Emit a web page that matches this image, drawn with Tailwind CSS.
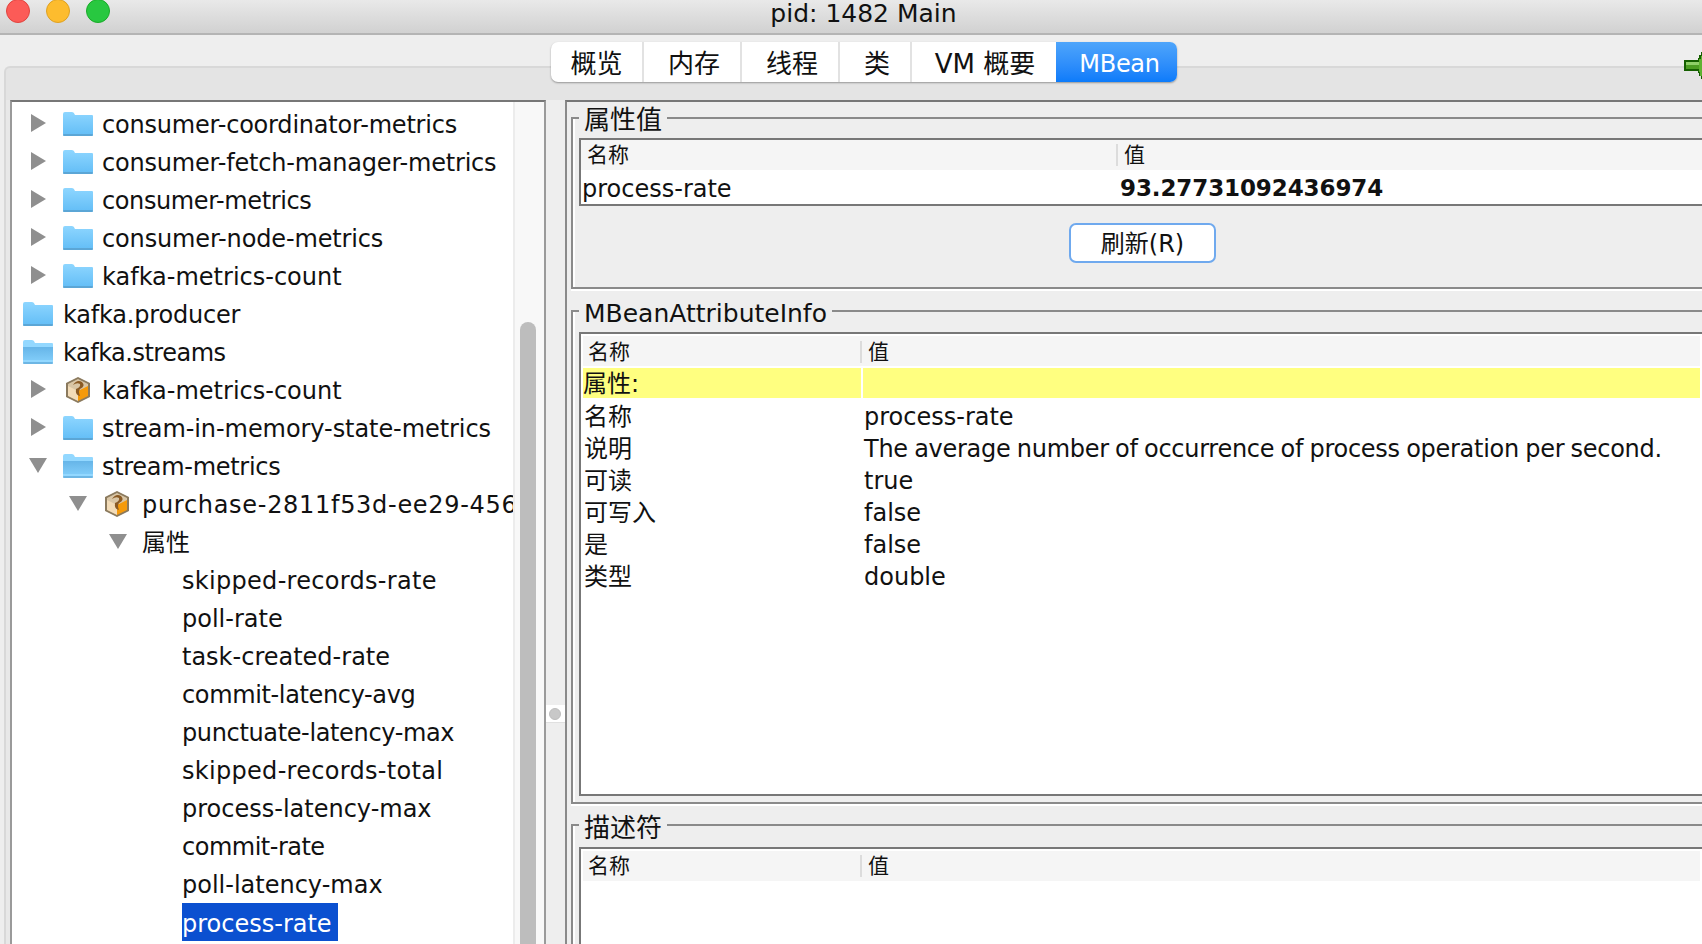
<!doctype html>
<html>
  <head>
    <meta charset="utf-8" />
    <script src="https://cdn.jsdelivr.net/npm/@tailwindcss/browser@4"></script>
    <title>pid: 1482 Main</title>
  </head>
  <body class="w-[1702px] h-[944px] overflow-hidden bg-[#eeeeee] text-[#111111] text-[24px] [font-family:'DejaVu_Sans','Noto_Sans_CJK_SC',sans-serif]">
    <svg class="absolute w-0 h-0">
      <defs>
        <linearGradient id="fg" x1="0" y1="0" x2="0" y2="1">
          <stop offset="0" stop-color="#8ed6ff" />
          <stop offset="1" stop-color="#62bdf6" />
        </linearGradient>
        <linearGradient id="fo" x1="0" y1="0" x2="0" y2="1">
          <stop offset="0" stop-color="#66b5e8" />
          <stop offset="1" stop-color="#7fcbf8" />
        </linearGradient>
        <symbol id="folder" viewBox="0 0 30 24">
          <path d="M0 2 Q0 0 2 0 H9 Q11 0 12 3 H29 Q30 3 30 4 V22 Q30 24 28 24 H2 Q0 24 0 22 Z" fill="url(#fg)" />
          <rect x="0" y="22" width="30" height="2" rx="1" fill="#5ba6d6" />
        </symbol>
        <symbol id="folder-open" viewBox="0 0 30 24">
          <path d="M0 2 Q0 0 2 0 H9 Q11 0 12 3 H29 Q30 3 30 4 V22 Q30 24 28 24 H2 Q0 24 0 22 Z" fill="#93d8ff" />
          <rect x="0" y="7" width="30" height="13" fill="url(#fo)" />
          <rect x="0" y="22" width="30" height="2" rx="1" fill="#6db6e4" />
        </symbol>
        <symbol id="bean" viewBox="0 0 26 28">
          <polygon points="13,1 25,7 25,21 13,27 1,21 1,7" fill="#8b7a5e" />
          <polygon points="13,3 23,8 23,12 13,15 3,12 3,8" fill="#d9c6a6" />
          <polygon points="3,10 13,15 13,25 3,20" fill="#f3dcb8" />
          <polygon points="23,10 13,15 13,25 23,20" fill="#f59a0a" />
          <path d="M8 9 Q12 3 17 6 Q21 10 15 13 Q13 15 15 20 Q10 19 11 13 Q16 11 15 8 Q12 6 8 9 Z" fill="#8a5a24" />
        </symbol>
        <symbol id="arrow-right" viewBox="0 0 15 18">
          <polygon points="0,0 15,9 0,18" fill="#8f8f8f" />
        </symbol>
        <symbol id="arrow-down" viewBox="0 0 18 15">
          <polygon points="0,0 18,0 9,15" fill="#8f8f8f" />
        </symbol>
      </defs>
    </svg>

    <!-- Title bar -->
    <header class="relative h-[35px] pl-[25px] flex justify-center bg-gradient-to-b from-[#e9e9e9] to-[#d1d1d1] border-b-2 border-[#b4b4b4]">
      <div class="absolute left-[6px] top-0 flex gap-[16px]">
        <span class="w-[24px] h-[24px] -mt-[1px] rounded-full bg-[#fc5b57] border border-[#e0443e]"></span>
        <span class="w-[24px] h-[24px] -mt-[1px] rounded-full bg-[#fdbc2e] border border-[#dea123]"></span>
        <span class="w-[24px] h-[24px] -mt-[1px] rounded-full bg-[#28c840] border border-[#1aab29]"></span>
      </div>
      <span class="text-[25px] leading-[28px]">pid: 1482 Main</span>
    </header>

    <!-- Tabs -->
    <nav class="relative z-10 mt-[7px] -mb-[16px] pl-[26px] flex justify-center">
      <div class="flex h-[40px] rounded-[7px] bg-white shadow-[0_1px_2px_rgba(0,0,0,0.35)] text-[26px] leading-[40px]">
        <button class="w-[93px] pt-[2px] border-r-2 border-[#e2e2e2]">概览</button>
        <button class="w-[98px] pt-[2px] pl-[4px] border-r-2 border-[#e2e2e2]">内存</button>
        <button class="w-[98px] pt-[2px] pl-[4px] border-r-2 border-[#e2e2e2]">线程</button>
        <button class="w-[72px] pt-[2px] pl-[4px] border-r-2 border-[#e2e2e2]">类</button>
        <button class="w-[144px] pt-[2px] pl-[2px]">VM 概要</button>
        <button class="w-[121px] pt-[2px] pl-[6px] rounded-r-[7px] text-white text-[24px] tracking-[-0.3px] bg-gradient-to-b from-[#4ea5fb] to-[#0b7bfa]">MBean</button>
      </div>
    </nav>

    <!-- Tabbed pane -->
    <div class="ml-[4px] h-[878px] flex flex-col rounded-tl-[6px] border-t-2 border-l-2 border-[#d8d8d8] bg-[#e4e4e4] overflow-hidden">
      <div class="h-[32px] shrink-0"></div>
      <div class="flex flex-1 min-h-0 bg-[#eeeeee]">
        <div class="w-[6px] shrink-0 bg-[#e8e8e8] -ml-[2px]"></div>

        <!-- MBean tree -->
        <div class="w-[536px] shrink-0 flex border-t-2 border-t-[#777777] border-x-2 border-x-[#9a9a9a] bg-white">
          <ul class="w-[501px] shrink-0 overflow-hidden pt-[3px] whitespace-nowrap [&>li>span]:pt-[2px]">
            <li class="h-[38px] flex items-center pl-[19px]"><svg class="w-[15px] h-[18px] -mt-[2px]"><use href="#arrow-right" /></svg><svg class="w-[30px] h-[24px] ml-[17px]"><use href="#folder" /></svg><span class="ml-[9px] tracking-[-0.2px]">consumer-coordinator-metrics</span></li>
            <li class="h-[38px] flex items-center pl-[19px]"><svg class="w-[15px] h-[18px] -mt-[2px]"><use href="#arrow-right" /></svg><svg class="w-[30px] h-[24px] ml-[17px]"><use href="#folder" /></svg><span class="ml-[9px] tracking-[-0.2px]">consumer-fetch-manager-metrics</span></li>
            <li class="h-[38px] flex items-center pl-[19px]"><svg class="w-[15px] h-[18px] -mt-[2px]"><use href="#arrow-right" /></svg><svg class="w-[30px] h-[24px] ml-[17px]"><use href="#folder" /></svg><span class="ml-[9px] tracking-[-0.4px]">consumer-metrics</span></li>
            <li class="h-[38px] flex items-center pl-[19px]"><svg class="w-[15px] h-[18px] -mt-[2px]"><use href="#arrow-right" /></svg><svg class="w-[30px] h-[24px] ml-[17px]"><use href="#folder" /></svg><span class="ml-[9px] tracking-[-0.15px]">consumer-node-metrics</span></li>
            <li class="h-[38px] flex items-center pl-[19px]"><svg class="w-[15px] h-[18px] -mt-[2px]"><use href="#arrow-right" /></svg><svg class="w-[30px] h-[24px] ml-[17px]"><use href="#folder" /></svg><span class="ml-[9px]">kafka-metrics-count</span></li>
            <li class="h-[38px] flex items-center pl-[11px]"><svg class="w-[30px] h-[24px]"><use href="#folder" /></svg><span class="ml-[10px] tracking-[-0.2px]">kafka.producer</span></li>
            <li class="h-[38px] flex items-center pl-[11px]"><svg class="w-[30px] h-[24px]"><use href="#folder-open" /></svg><span class="ml-[10px] tracking-[-0.5px]">kafka.streams</span></li>
            <li class="h-[38px] flex items-center pl-[19px]"><svg class="w-[15px] h-[18px] -mt-[2px]"><use href="#arrow-right" /></svg><svg class="w-[26px] h-[28px] ml-[19px] mr-[2px]"><use href="#bean" /></svg><span class="ml-[9px]">kafka-metrics-count</span></li>
            <li class="h-[38px] flex items-center pl-[19px]"><svg class="w-[15px] h-[18px] -mt-[2px]"><use href="#arrow-right" /></svg><svg class="w-[30px] h-[24px] ml-[17px]"><use href="#folder" /></svg><span class="ml-[9px] tracking-[-0.07px]">stream-in-memory-state-metrics</span></li>
            <li class="h-[38px] flex items-center pl-[17px]"><svg class="w-[18px] h-[15px] -mt-[2px]"><use href="#arrow-down" /></svg><svg class="w-[30px] h-[24px] ml-[16px]"><use href="#folder-open" /></svg><span class="ml-[9px] tracking-[-0.3px]">stream-metrics</span></li>
            <li class="h-[38px] flex items-center pl-[57px]"><svg class="shrink-0 w-[18px] h-[15px] -mt-[2px]"><use href="#arrow-down" /></svg><svg class="shrink-0 w-[26px] h-[28px] ml-[17px]"><use href="#bean" /></svg><span class="ml-[12px] tracking-[0.7px]">purchase-2811f53d-ee29-456</span></li>
            <li class="h-[38px] flex items-center pl-[97px]"><svg class="w-[18px] h-[15px] -mt-[2px]"><use href="#arrow-down" /></svg><span class="ml-[15px]">属性</span></li>
            <li class="h-[38px] flex items-center pl-[170px]"><span class="tracking-[0.3px]">skipped-records-rate</span></li>
            <li class="h-[38px] flex items-center pl-[170px]"><span>poll-rate</span></li>
            <li class="h-[38px] flex items-center pl-[170px]"><span>task-created-rate</span></li>
            <li class="h-[38px] flex items-center pl-[170px]"><span class="tracking-[-0.36px]">commit-latency-avg</span></li>
            <li class="h-[38px] flex items-center pl-[170px]"><span class="tracking-[-0.36px]">punctuate-latency-max</span></li>
            <li class="h-[38px] flex items-center pl-[170px]"><span class="tracking-[0.3px]">skipped-records-total</span></li>
            <li class="h-[38px] flex items-center pl-[170px]"><span>process-latency-max</span></li>
            <li class="h-[38px] flex items-center pl-[170px]"><span class="tracking-[-0.5px]">commit-rate</span></li>
            <li class="h-[38px] flex items-center pl-[170px]"><span>poll-latency-max</span></li>
            <li class="h-[38px] flex items-center pl-[170px]"><span class="w-[156px] h-[38px] leading-[38px] bg-[#0b50d0] text-white">process-rate</span></li>
          </ul>
          <!-- Tree scrollbar -->
          <div class="flex-1 border-l-2 border-[#ececec] bg-[#f8f8f8] pl-[5px] pt-[220px]">
            <div class="w-[16px] h-full rounded-t-[8px] bg-[#bdbdbd]"></div>
          </div>
        </div>

        <!-- Split pane divider -->
        <div class="w-[19px] shrink-0 pt-[605px]">
          <div class="h-[18px] pr-[2px] flex items-center justify-center bg-white border-b border-[#e0e0e0]">
            <span class="w-[12px] h-[12px] rounded-full bg-[#c8c8c8] border border-[#bdbdbd]"></span>
          </div>
        </div>

        <!-- Attribute panels -->
        <div class="flex-1 min-w-0 overflow-hidden flex flex-col border-t-2 border-t-[#777777] border-l-2 border-l-[#8a8a8a] pt-[2px] pl-[4px]">
          <fieldset class="h-[185px] shrink-0 border-2 border-r-0 border-[#8a8a8a] shadow-[0_2px_0_#ffffff,inset_2px_0_0_#ffffff] pl-[6px] pt-[6px]">
            <legend class="h-[28px] leading-[32px] px-[5px] bg-[#eeeeee] text-[26px]">属性值</legend>
            <div class="border-2 border-r-0 border-[#777777] bg-white">
              <div class="h-[30px] flex items-center bg-[#f5f5f5] text-[21px]">
                <span class="w-[537px] pl-[6px] border-r-2 border-[#dcdcdc] leading-[22px]">名称</span>
                <span class="pl-[6px] leading-[22px]">值</span>
              </div>
              <div class="h-[34px] pt-[3px] flex items-center">
                <span class="w-[539px] pl-[1px]">process-rate</span>
                <span class="font-bold text-[23px] tracking-[-0.1px]">93.27731092436974</span>
              </div>
            </div>
            <div class="flex pl-[490px] pt-[17px]">
              <button class="w-[147px] h-[40px] pt-[1px] rounded-[7px] bg-white border-2 border-[#6fa9ee]">刷新(R)</button>
            </div>
          </fieldset>

          <fieldset class="mt-[8px] h-[507px] shrink-0 border-2 border-r-0 border-[#8a8a8a] shadow-[0_2px_0_#ffffff,inset_2px_0_0_#ffffff] pl-[6px] pt-[7px]">
            <legend class="h-[28px] leading-[34px] px-[5px] bg-[#eeeeee] text-[25px]">MBeanAttributeInfo</legend>
            <div class="h-[464px] border-2 border-r-0 border-[#777777] bg-white pt-[2px] [&>div]:pt-[2px]">
              <div class="h-[30px] ml-[2px] mr-[2px] flex items-center bg-[#f5f5f5] text-[21px] mb-[2px] !pt-[1px]">
                <span class="w-[279px] pl-[5px] border-r-2 border-[#dcdcdc] leading-[22px]">名称</span>
                <span class="pl-[6px] leading-[22px]">值</span>
              </div>
              <div class="h-[30px] ml-[2px] mr-[2px] mb-[2px] flex items-center !pt-0">
                <span class="w-[278px] h-full pt-[2px] bg-[#ffff80] flex items-center">属性:</span>
                <span class="flex-1 ml-[2px] h-full bg-[#ffff80]"></span>
              </div>
              <div class="h-[32px] flex items-center"><span class="w-[283px] pl-[3px]">名称</span><span>process-rate</span></div>
              <div class="h-[32px] flex items-center"><span class="w-[283px] pl-[3px]">说明</span><span class="[word-spacing:-1px] tracking-[-0.28px]">The average number of occurrence of process operation per second.</span></div>
              <div class="h-[32px] flex items-center"><span class="w-[283px] pl-[3px]">可读</span><span>true</span></div>
              <div class="h-[32px] flex items-center"><span class="w-[283px] pl-[3px]">可写入</span><span>false</span></div>
              <div class="h-[32px] flex items-center"><span class="w-[283px] pl-[3px]">是</span><span>false</span></div>
              <div class="h-[32px] flex items-center"><span class="w-[283px] pl-[3px]">类型</span><span>double</span></div>
            </div>
          </fieldset>

          <fieldset class="mt-[7px] flex-1 min-h-0 border-2 border-r-0 border-b-0 border-[#8a8a8a] shadow-[inset_2px_0_0_#ffffff] pl-[6px] pt-[8px]">
            <legend class="h-[28px] leading-[34px] px-[5px] bg-[#eeeeee] text-[26px]">描述符</legend>
            <div class="h-[200px] border-2 border-r-0 border-b-0 border-[#777777] bg-white pt-[2px]">
              <div class="h-[30px] ml-[2px] mr-[2px] flex items-center bg-[#f5f5f5] text-[21px]">
                <span class="w-[279px] pl-[5px] border-r-2 border-[#dcdcdc] leading-[22px]">名称</span>
                <span class="pl-[6px] leading-[22px]">值</span>
              </div>
            </div>
          </fieldset>
        </div>
      </div>
    </div>

    <!-- Toolbar arrow at the window edge -->
    <svg class="absolute left-[1684px] top-[52px] z-20 w-[18px] h-[27px]" viewBox="0 0 18 27" shape-rendering="crispEdges">
      <path d="M14 8 V6 H15 V3 H17 V0 H18 V27 H17 V24 H15 V21 H14 V19 H0 V8 Z" fill="#155f00" />
      <rect x="2" y="10" width="13" height="3" fill="#8fd068" />
      <rect x="2" y="13" width="13" height="4" fill="#4c9e22" />
      <path d="M15 7 H17 V4 H18 V24 H16 V20 H15 Z" fill="#5fb231" />
    </svg>
  </body>
</html>
